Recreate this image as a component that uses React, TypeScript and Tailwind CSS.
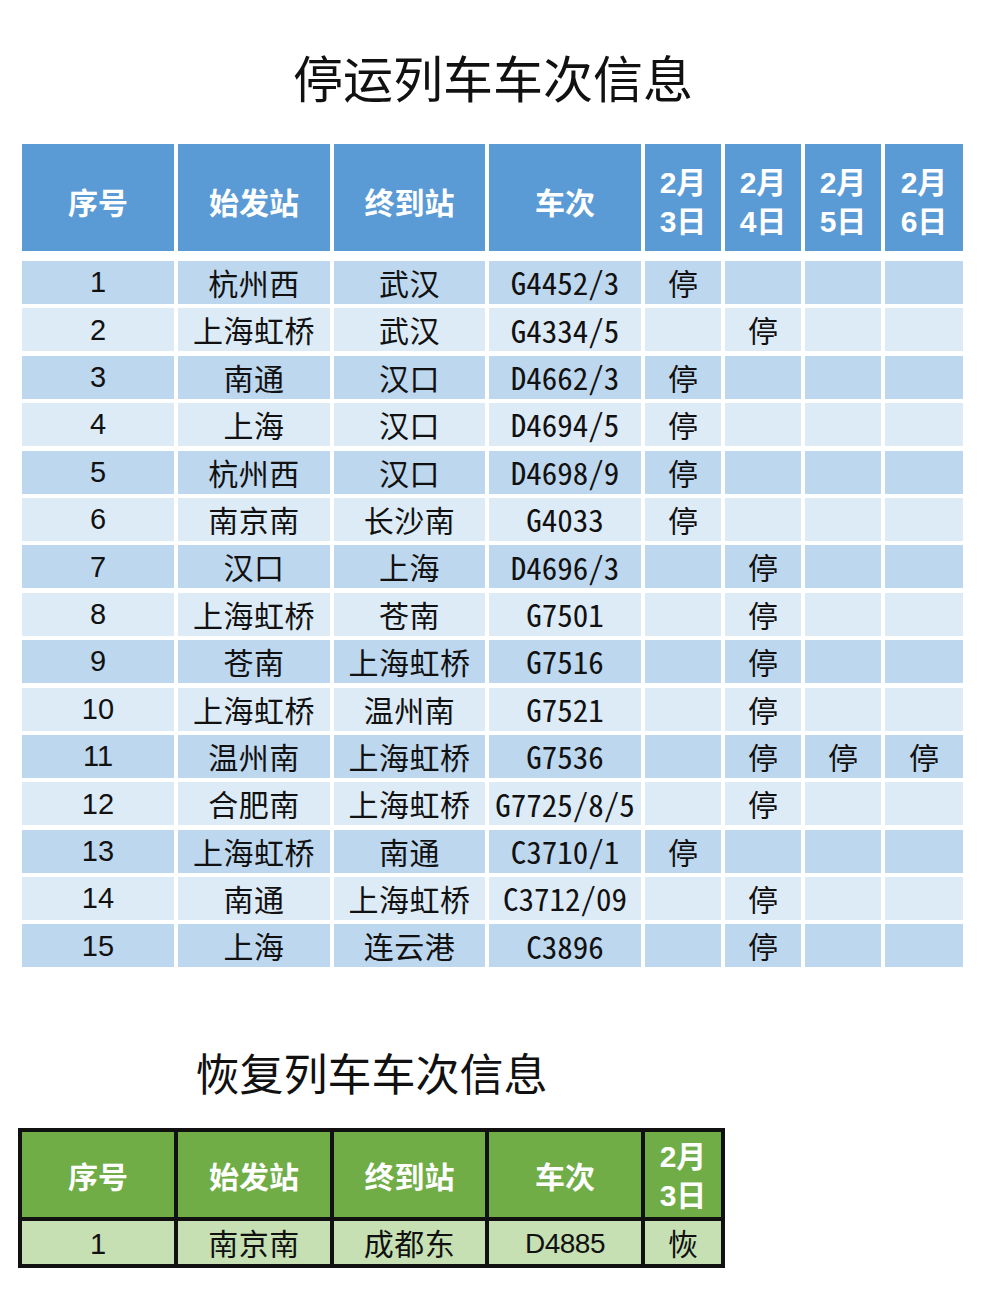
import React from "react";

// 停运列车 데이터
interface TrainRow {
    no: number;
    from: string;
    to: string;
    train: string;
    stops: number[]; // 停 표시할 날짜 index (0 = 2월3일)
}

const rows: TrainRow[] = [
    { no: 1, from: "杭州西", to: "武汉", train: "G4452/3", stops: [0] },
    { no: 2, from: "上海虹桥", to: "武汉", train: "G4334/5", stops: [1] },
    { no: 3, from: "南通", to: "汉口", train: "D4662/3", stops: [0] },
    { no: 4, from: "上海", to: "汉口", train: "D4694/5", stops: [0] },
    { no: 5, from: "杭州西", to: "汉口", train: "D4698/9", stops: [0] },
    { no: 6, from: "南京南", to: "长沙南", train: "G4033", stops: [0] },
    { no: 7, from: "汉口", to: "上海", train: "D4696/3", stops: [1] },
    { no: 8, from: "上海虹桥", to: "苍南", train: "G7501", stops: [1] },
    { no: 9, from: "苍南", to: "上海虹桥", train: "G7516", stops: [1] },
    { no: 10, from: "上海虹桥", to: "温州南", train: "G7521", stops: [1] },
    { no: 11, from: "温州南", to: "上海虹桥", train: "G7536", stops: [1, 2, 3] },
    { no: 12, from: "合肥南", to: "上海虹桥", train: "G7725/8/5", stops: [1] },
    { no: 13, from: "上海虹桥", to: "南通", train: "C3710/1", stops: [0] },
    { no: 14, from: "南通", to: "上海虹桥", train: "C3712/09", stops: [1] },
    { no: 15, from: "上海", to: "连云港", train: "C3896", stops: [1] },
];

const days = ["3日", "4日", "5日", "6日"];

const cjk = "font-['Noto_Sans_CJK_SC','Noto_Sans',sans-serif]";
const latin = "font-['Liberation_Sans','Noto_Sans_CJK_SC',sans-serif]";
const mono = "font-['Noto_Sans_Mono_CJK_SC','DejaVu_Sans_Mono',monospace]";

const topCols = "grid-cols-[152px_152px_151px_152px_76px_76px_76px_78px]";
const greenCols = "grid-cols-[152px_152px_151px_152px_76px]";

const Cell = ({ className, children }: { className?: string; children?: React.ReactNode }) => (
    <div className={`flex items-center justify-center text-[#111] ${className ?? ""}`}>{children}</div>
);

const HeadCell = ({ children, className }: { children: React.ReactNode; className: string }) => (
    <div className={`flex items-center justify-center text-white font-bold text-[30px] leading-[38px] ${cjk} ${className}`}>
        {children}
    </div>
);

const DateHead = ({ day, className }: { day: string; className: string }) => (
    <div className={`flex flex-col items-center justify-center text-white font-bold text-[30px] leading-[38.5px] ${latin} ${className}`}>
        <span>2月</span>
        <span>{day}</span>
    </div>
);

const App = () => {
    return (
        <div className="w-[986px] h-[1303px] bg-white overflow-hidden">
            {/* 停运 제목 */}
            <div className="pt-[46px]">
                <h1 className={`text-center text-[50px] leading-[60px] font-normal text-[#111] ${cjk}`}>停运列车车次信息</h1>
            </div>

            {/* 停运 표 */}
            <div className="ml-[22px] mt-[38px]">
                <div className={`grid ${topCols} gap-x-[4px] h-[107px]`}>
                    <HeadCell className="bg-[#5b9bd5] pt-[6px]">序号</HeadCell>
                    <HeadCell className="bg-[#5b9bd5] pt-[6px]">始发站</HeadCell>
                    <HeadCell className="bg-[#5b9bd5] pt-[6px]">终到站</HeadCell>
                    <HeadCell className="bg-[#5b9bd5] pt-[6px]">车次</HeadCell>
                    {days.map((d) => (
                        <DateHead key={d} day={d} className="bg-[#5b9bd5] pt-[10px]" />
                    ))}
                </div>

                <div className={`grid ${topCols} gap-x-[4px] gap-y-[4.4px] mt-[10px] auto-rows-[43px]`}>
                    {rows.map((r) => {
                        const bg = r.no % 2 === 1 ? "bg-[#bdd7ee]" : "bg-[#ddebf7]";
                        return (
                            <React.Fragment key={r.no}>
                                <Cell className={`${bg} ${latin} text-[29px] pt-[1px]`}>{r.no}</Cell>
                                <Cell className={`${bg} ${cjk} text-[30px] tracking-[0.5px]`}>{r.from}</Cell>
                                <Cell className={`${bg} ${cjk} text-[30px] tracking-[0.5px]`}>{r.to}</Cell>
                                <Cell className={`${bg} ${mono} text-[31px]`}>{r.train}</Cell>
                                {days.map((d, i) => (
                                    <Cell key={d} className={`${bg} ${cjk} text-[30px]`}>
                                        {r.stops.includes(i) ? "停" : ""}
                                    </Cell>
                                ))}
                            </React.Fragment>
                        );
                    })}
                </div>
            </div>

            {/* 恢复 영역 */}
            <div className="ml-[18px] w-[707px] mt-[75px]">
                <h2 className={`text-center text-[44px] leading-[60px] font-normal text-[#111] ${cjk}`}>恢复列车车次信息</h2>

                <div className={`mt-[26px] grid ${greenCols} gap-[4px] p-[4px] bg-[#111] grid-rows-[85px_43px]`}>
                    <HeadCell className="bg-[#70ad47]">序号</HeadCell>
                    <HeadCell className="bg-[#70ad47]">始发站</HeadCell>
                    <HeadCell className="bg-[#70ad47]">终到站</HeadCell>
                    <HeadCell className="bg-[#70ad47]">车次</HeadCell>
                    <DateHead day="3日" className="bg-[#70ad47] pt-[4px]" />

                    <Cell className={`bg-[#c6e0b4] ${latin} text-[29px] pt-[3px]`}>1</Cell>
                    <Cell className={`bg-[#c6e0b4] ${cjk} text-[30px] tracking-[0.5px]`}>南京南</Cell>
                    <Cell className={`bg-[#c6e0b4] ${cjk} text-[30px] tracking-[0.5px]`}>成都东</Cell>
                    <Cell className={`bg-[#c6e0b4] ${latin} text-[28px] tracking-[-0.5px] pt-[3px]`}>D4885</Cell>
                    <Cell className={`bg-[#c6e0b4] ${cjk} text-[30px]`}>恢</Cell>
                </div>
            </div>
        </div>
    );
};

export default App;
